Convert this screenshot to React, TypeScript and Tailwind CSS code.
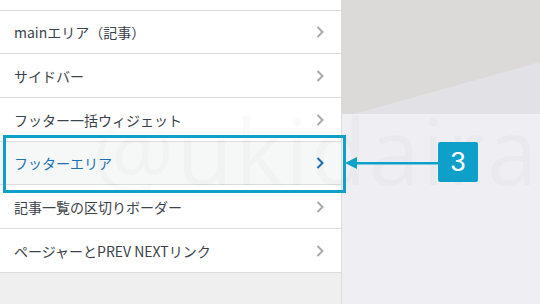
import React from "react";

const rows: { label: string; h: string; active?: boolean }[] = [
  { label: "mainエリア（記事）", h: "h-[42px]" },
  { label: "サイドバー", h: "h-[43px]" },
  { label: "フッター一括ウィジェット", h: "h-[43px]" },
  { label: "フッターエリア", h: "h-[42px]", active: true },
  { label: "記事一覧の区切りボーダー", h: "h-[43px]" },
  { label: "ページャーとPREV NEXTリンク", h: "h-[43px]" },
];

function Chevron({ active }: { active?: boolean }) {
  return (
    <svg width="10" height="14" viewBox="0 0 10 14" className="shrink-0">
      <path
        d="M2.5 2 L7.5 7 L2.5 12"
        fill="none"
        stroke={active ? "#2271b1" : "#a7aaad"}
        strokeWidth="2"
      />
    </svg>
  );
}

export default function App() {
  return (
    <div
      className="relative w-[540px] h-[304px] overflow-hidden flex bg-[#efeef2]"
      style={{ fontFamily: '"Noto Sans CJK JP", "Noto Sans", sans-serif' }}
    >
      <div className="w-[342px] h-full shrink-0 flex flex-col bg-[#efefef] border-r border-[#dcdcde] z-10">
        <div className="h-[11px] bg-white border-b border-[#dcdcde]" />
        {rows.map((r) => (
          <div
            key={r.label}
            className={`${r.h} box-content border-b border-[#dcdcde] flex items-center justify-between pl-[14px] pr-[16px] ${
              r.active ? "bg-[#f6f7f7] text-[#2271b1]" : "bg-white text-[#3c434a]"
            }`}
          >
            <span className="text-[14px] leading-none">{r.label}</span>
            <Chevron active={r.active} />
          </div>
        ))}
      </div>
      <div className="relative flex-1 h-full">
        <svg className="absolute inset-0" width="198" height="304" viewBox="0 0 198 304">
          <rect x="0" y="0" width="198" height="114" fill="#e2e1e5" />
          <polygon points="0,0 198,0 198,62 12,114 0,114" fill="#dcdad9" />
        </svg>
      </div>

      {/* watermark */}
      <div
        className="absolute left-[92px] top-[104px] z-20 pointer-events-none text-[92px] leading-none text-black/[0.02] tracking-[2px]"
        style={{ fontFamily: '"Open Sans", sans-serif' }}
      >
        @ukidaira
      </div>

      {/* highlight box */}
      <div className="absolute left-[3px] top-[135px] w-[343px] h-[58px] border-[3px] border-[#0fa0c9] z-30" />

      {/* arrow */}
      <div className="absolute left-[345px] top-[157px] z-30 flex items-center">
        <svg width="94" height="12" viewBox="0 0 94 12">
          <polygon points="0,6 12,0 12,12" fill="#0fa0c9" />
          <rect x="10" y="5" width="84" height="2.5" fill="#0fa0c9" />
        </svg>
      </div>

      {/* badge */}
      <div
        className="absolute left-[438px] top-[142px] w-[40px] h-[40px] rounded-[2px] bg-[#0fa0c9] text-white text-[27px] flex items-center justify-center z-30"
        style={{ fontFamily: '"Liberation Sans", Arial, sans-serif' }}
      >
        3
      </div>
    </div>
  );
}
